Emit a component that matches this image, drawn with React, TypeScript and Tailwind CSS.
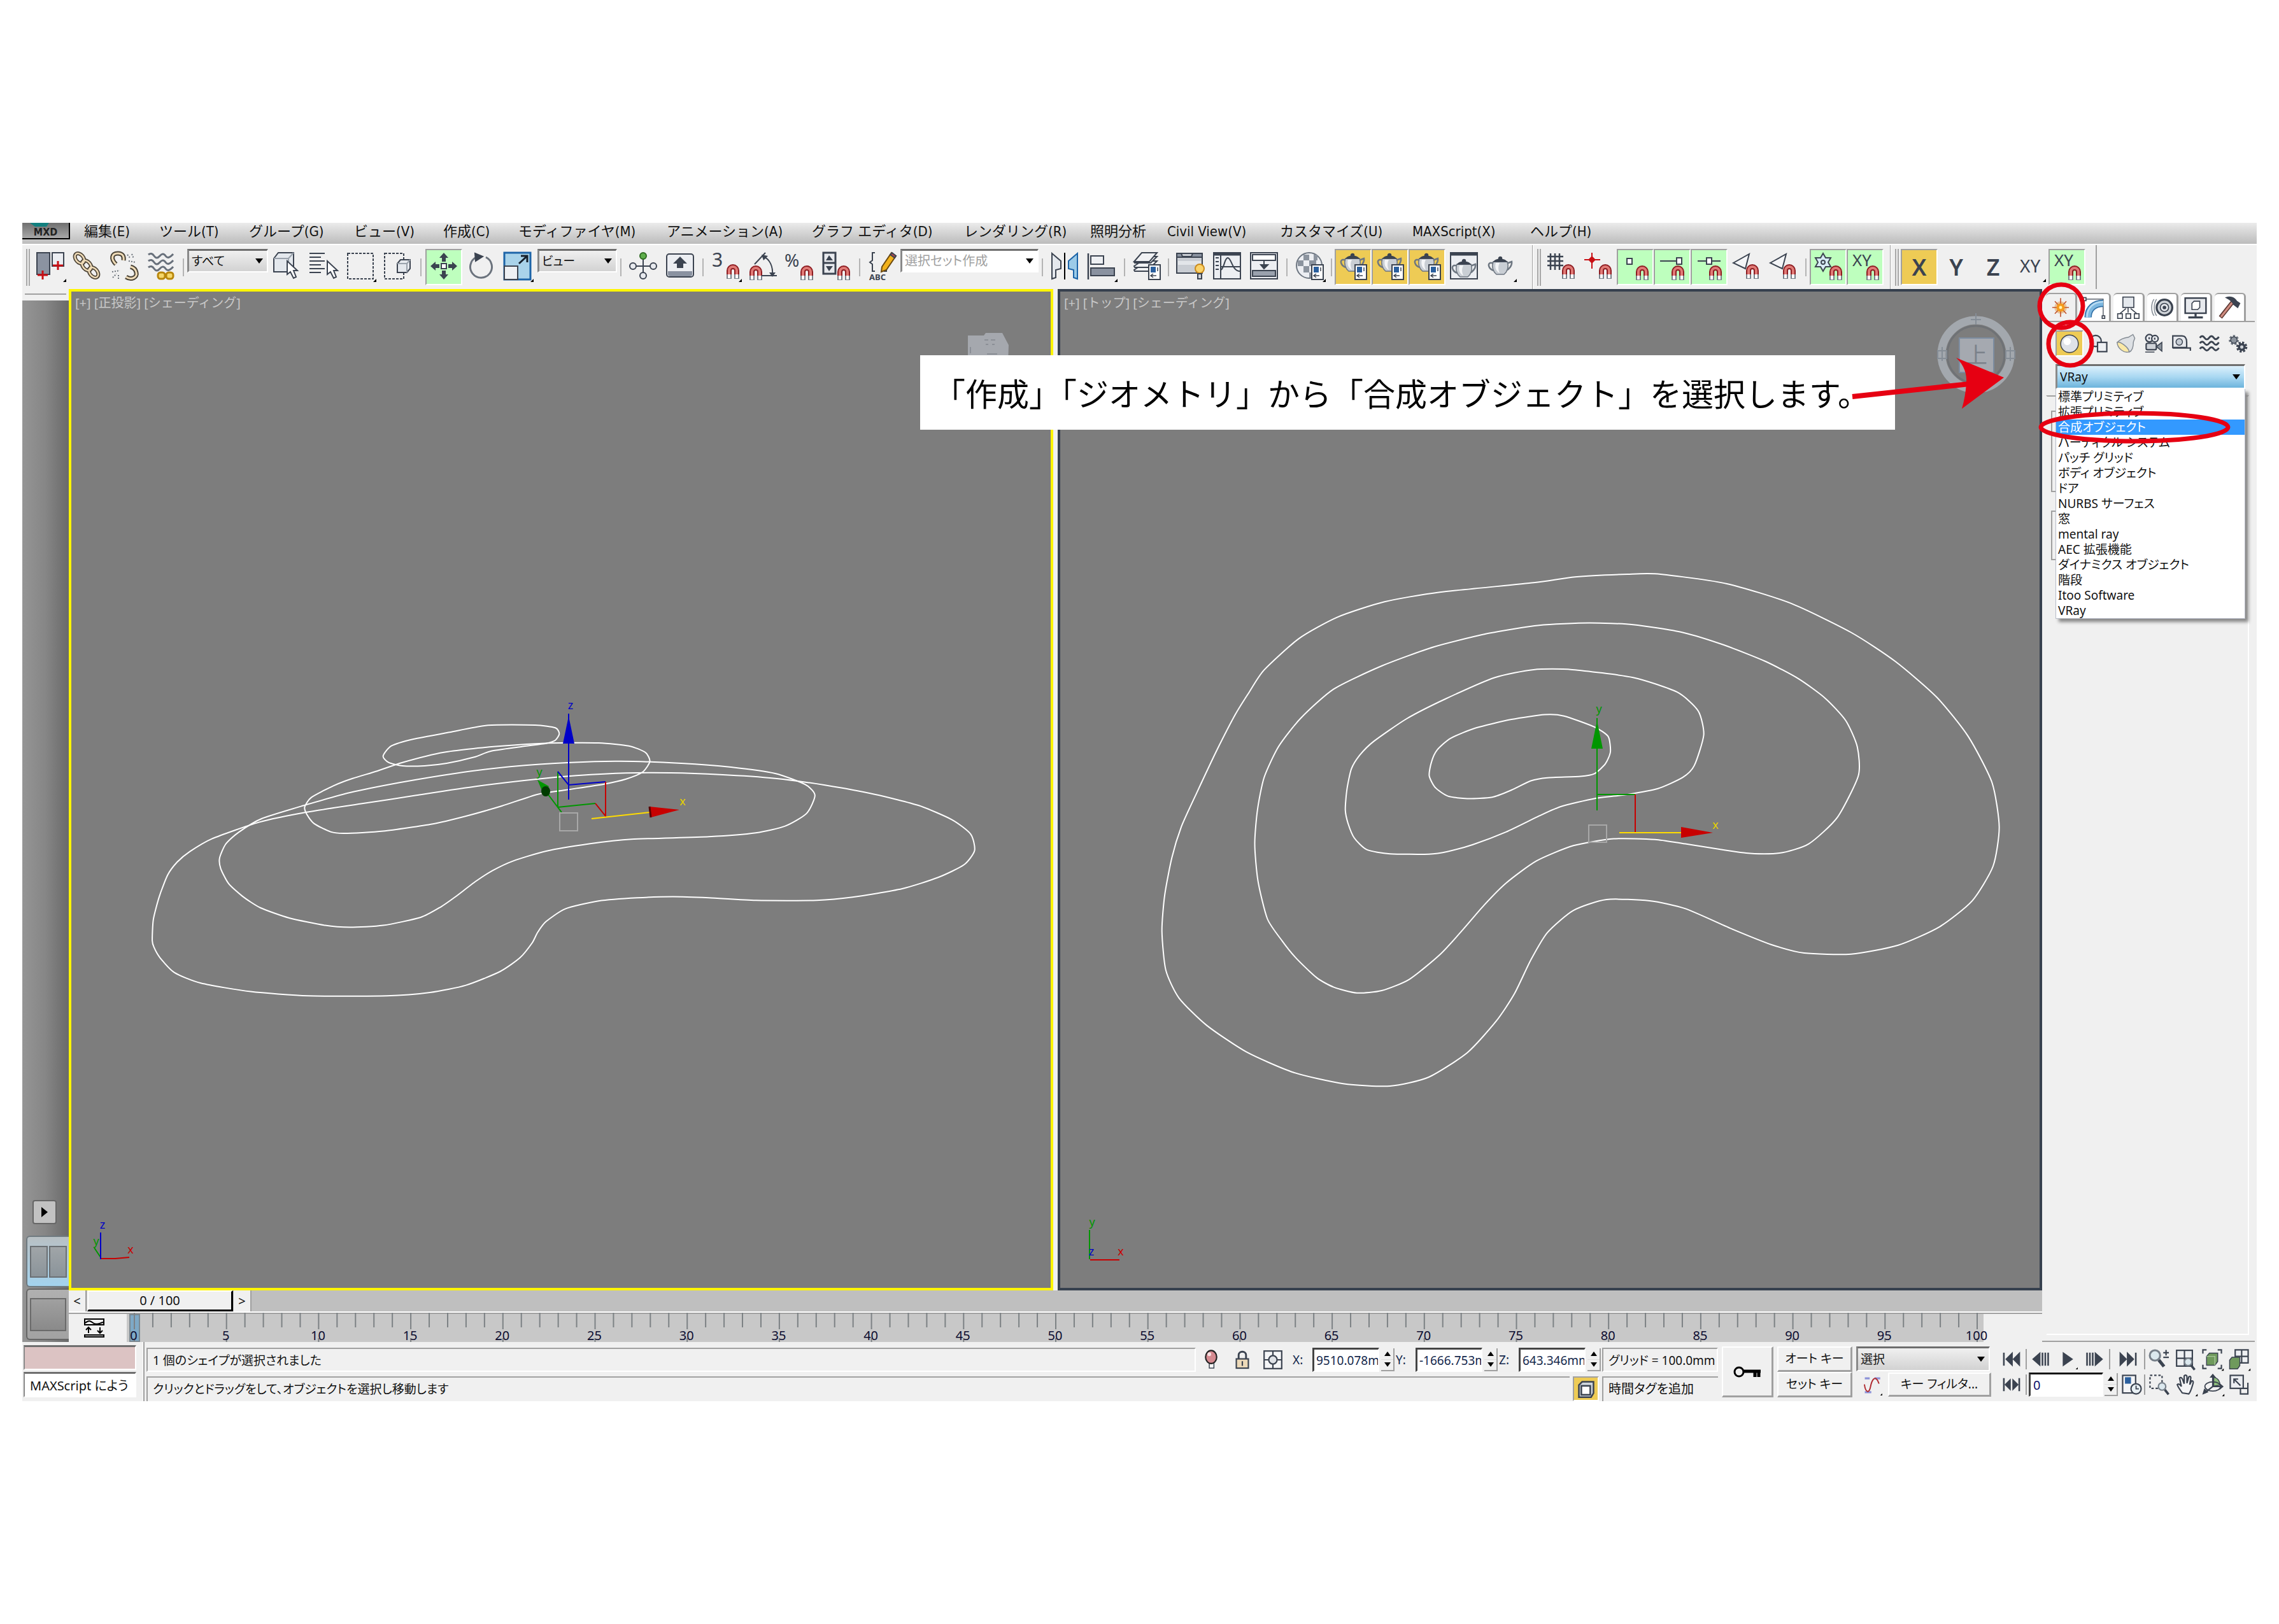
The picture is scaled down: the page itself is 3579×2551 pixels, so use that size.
import type { ReactNode } from "react";
import clsx from "clsx";

type Point = [number, number];

const INK = "#3b4350";

const sunken =
  "border-2 border-t-[#a0a0a0] border-l-[#a0a0a0] border-r-white border-b-white";
const raised =
  "border-t-2 border-l-2 border-r-3 border-b-3 border-t-white border-l-white border-r-[#a0a0a0] border-b-[#a0a0a0]";

/* ---------- splines ---------- */

// Closed Catmull-Rom spline, points are given on a scaled grid
function spline(points: Point[], ox: number, oy: number, sx: number, sy: number) {
  const p = points.map(([x, y]) => [ox + x * sx, oy + y * sy]);
  const n = p.length;
  const tension = 9;
  let d = `M${p[0][0].toFixed(1)} ${p[0][1].toFixed(1)}`;
  for (let i = 0; i < n; i++) {
    const a = p[(i - 1 + n) % n];
    const b = p[i];
    const c = p[(i + 1) % n];
    const e = p[(i + 2) % n];
    const c1 = [b[0] + (c[0] - a[0]) / tension, b[1] + (c[1] - a[1]) / tension];
    const c2 = [c[0] - (e[0] - b[0]) / tension, c[1] - (e[1] - b[1]) / tension];
    d += `C${[...c1, ...c2, ...c].map((v) => v.toFixed(1)).join(" ")}`;
  }
  return d + "Z";
}

const perspectiveShapes: Point[][] = [
  [
    [22, 1190], [24, 1090], [35, 980], [50, 880], [67, 820], [90, 770], [130, 710], [215, 632],
    [300, 585], [400, 545], [500, 505], [610, 462], [720, 428], [790, 412], [880, 400], [960, 399],
    [1050, 407], [1150, 425], [1240, 457], [1330, 500], [1410, 553], [1470, 620], [1504, 688],
    [1511, 765], [1492, 832], [1445, 892], [1380, 945], [1290, 985], [1225, 1000], [1115, 1000],
    [1030, 988], [965, 983], [900, 988], [830, 1003], [770, 1040], [735, 1100], [720, 1150],
    [710, 1200], [688, 1270], [652, 1335], [590, 1400], [525, 1434], [447, 1450], [305, 1450],
    [200, 1430], [110, 1390], [62, 1340], [36, 1270], [25, 1220],
  ],
  [
    [144, 800], [155, 735], [178, 680], [220, 615], [300, 550], [380, 492], [470, 445], [570, 402],
    [670, 370], [780, 350], [870, 344], [980, 354], [1070, 372], [1150, 402], [1205, 455],
    [1222, 505], [1207, 590], [1168, 650], [1115, 682], [1030, 700], [890, 712], [815, 733],
    [735, 768], [675, 815], [638, 860], [608, 910], [570, 985], [545, 1030], [508, 1080],
    [440, 1118], [380, 1127], [335, 1118], [270, 1083], [218, 1035], [185, 980], [160, 920],
    [146, 850],
  ],
  [
    [298, 560], [310, 515], [350, 460], [385, 425], [430, 390], [475, 350], [550, 302], [640, 275],
    [740, 259], [830, 258], [885, 272], [915, 303], [923, 345], [910, 395], [880, 428], [840, 452],
    [770, 480], [720, 500], [655, 555], [590, 603], [530, 640], [440, 674], [370, 684], [345, 677],
    [315, 638], [302, 595],
  ],
  [
    [440, 320], [455, 272], [495, 240], [560, 208], [630, 175], [715, 174], [752, 187], [759, 215],
    [752, 245], [735, 260], [690, 276], [635, 297], [605, 325], [555, 354], [515, 366], [475, 366],
    [450, 350],
  ],
];

const topShapes: Point[][] = [
  [
    [17, 1085], [22, 980], [35, 870], [52, 780], [80, 680], [115, 560], [150, 450], [175, 385],
    [202, 320], [265, 228], [335, 165], [420, 120], [520, 92], [690, 64], [765, 47], [860, 39],
    [920, 39], [1040, 67], [1155, 124], [1265, 210], [1345, 295], [1420, 400], [1477, 515],
    [1520, 650], [1533, 780], [1522, 895], [1484, 997], [1425, 1073], [1350, 1127], [1265, 1153],
    [1180, 1150], [1120, 1125], [1050, 1080], [965, 1020], [900, 997], [822, 993], [762, 1025],
    [715, 1090], [685, 1170], [655, 1270], [622, 1350], [570, 1442], [500, 1514], [430, 1540],
    [345, 1533], [255, 1500], [170, 1440], [98, 1362], [48, 1282], [24, 1200],
  ],
  [
    [185, 830], [190, 730], [202, 635], [228, 545], [268, 462], [328, 376], [415, 308], [510, 252],
    [610, 212], [700, 189], [790, 182], [870, 187], [960, 210], [1035, 247], [1110, 295],
    [1170, 346], [1218, 403], [1255, 468], [1276, 545], [1278, 630], [1240, 752], [1188, 830],
    [1135, 857], [1075, 857], [965, 830], [910, 817], [835, 815], [762, 835], [695, 880],
    [640, 945], [600, 1010], [560, 1085], [520, 1155], [465, 1227], [415, 1260], [370, 1267],
    [328, 1250], [297, 1222], [260, 1165], [235, 1115], [208, 1050], [191, 940],
  ],
  [
    [349, 730], [352, 670], [360, 610], [375, 570], [400, 530], [460, 463], [530, 405], [620, 342],
    [690, 319], [760, 319], [870, 342], [950, 385], [988, 440], [998, 510], [981, 600], [960, 635],
    [915, 668], [860, 685], [800, 697], [740, 720], [700, 748], [640, 795], [580, 832], [535, 852],
    [500, 860], [430, 859], [388, 847], [365, 812], [354, 770],
  ],
  [
    [501, 630], [505, 590], [515, 555], [540, 520], [585, 490], [650, 465], [710, 451], [745, 455],
    [800, 487], [825, 515], [829, 560], [820, 595], [800, 624], [775, 632], [715, 636], [685, 645],
    [650, 672], [615, 693], [570, 697], [535, 690], [512, 665],
  ],
];

/* ---------- icon parts ---------- */

function Svg({ children, flyout, className = "size-11" }: { children: ReactNode; flyout?: boolean; className?: string }) {
  return (
    <svg viewBox="0 0 44 44" className={clsx("shrink-0 overflow-visible", className)} fill="none" stroke={INK} strokeWidth="2" aria-hidden>
      {children}
      {flyout && <path d="M47 42v5h-5z" fill="#000" stroke="none" />}
    </svg>
  );
}

function Magnet({ x = 23, y = 20 }: { x?: number; y?: number }) {
  return (
    <g transform={`translate(${x} ${y})`}>
      <path d="M4 22V9a6 6 0 0 1 12 0v13" stroke="#8e1d22" strokeWidth="8" />
      <path d="M4 15V9a6 6 0 0 1 12 0v6" stroke="#e07a76" strokeWidth="4" />
      <path d="M4 15v7M16 15v7" stroke="#77808a" strokeWidth="8" />
      <path d="M4 15v6M16 15v6" stroke="#fff" strokeWidth="4" />
    </g>
  );
}

function Teapot({ x = 0, y = 0 }: { x?: number; y?: number }) {
  return (
    <g transform={`translate(${x} ${y})`} strokeWidth="1.5">
      <path d="M10 10H5c-4 2-2 10 6 12M31 11l8-3c1 6-4 12-9 14" stroke="#6d7681" strokeWidth="2.5" />
      <path d="M10 8h22c3 8 0 16-5 20H15C10 24 7 16 10 8z" fill="#c9ced4" stroke="#6d7681" />
      <path d="M14 10h6c-3 6-2 11 0 16-6-3-8-10-6-16z" fill="#f4f5f7" stroke="none" />
      <path d="M11 8c4-5 16-5 20 0z" fill={INK} />
      <circle cx="21" cy="3" r="2.5" fill={INK} />
    </g>
  );
}

function Page() {
  return (
    <g>
      <rect x="25" y="20" width="18" height="23" fill="#fff" />
      <rect x="28" y="23" width="8" height="9" fill="#2a5f9e" stroke="none" />
      <path d="M28 37h9M32 34l-4 3 4 3M39 24v6" strokeWidth="1.5" />
    </g>
  );
}

function Cursor({ x, y }: { x: number; y: number }) {
  return (
    <path transform={`translate(${x} ${y})`} d="M0 0v21l5-4 5 10 4-2-4-10h6z" fill="#fff" />
  );
}

function Cross({ x, y }: { x: number; y: number }) {
  return <path transform={`translate(${x} ${y})`} d="M-8 0h16M0-7v14M-3 0h6" stroke="#c80f14" strokeWidth="3" />;
}

/* ---------- toolbar ---------- */

const TONE = {
  none: "",
  green: "bg-[#beffbe] border-2 border-t-[#a0a0a0] border-l-[#a0a0a0] border-r-white border-b-white",
  yellow: "bg-[#eecb55] border-2 border-t-[#a0a0a0] border-l-[#a0a0a0] border-r-white border-b-white",
};

function Tool({
  label,
  tone = "none",
  flyout,
  children,
}: {
  label: string;
  tone?: keyof typeof TONE;
  flyout?: boolean;
  children: ReactNode;
}) {
  return (
    <button
      type="button"
      aria-label={label}
      className={clsx("flex h-[57px] w-[58px] shrink-0 items-center justify-center pb-1", TONE[tone])}
    >
      <Svg flyout={flyout}>{children}</Svg>
    </button>
  );
}

function AxisTool({ label, tone = "none" }: { label: string; tone?: keyof typeof TONE }) {
  return (
    <button
      type="button"
      className={clsx(
        "h-[57px] w-[58px] shrink-0 text-center text-[36px] leading-[54px] font-semibold text-[#3b4350]",
        TONE[tone],
      )}
    >
      {label}
    </button>
  );
}

function Sep({ className = "w-[13px]" }: { className?: string }) {
  return (
    <div className={clsx("flex h-[57px] shrink-0 items-center justify-center", className)}>
      <div className="h-7 w-0.5 bg-[#b4b4b4]" />
    </div>
  );
}

function Grip() {
  return (
    <div className="flex h-[58px] w-[15px] shrink-0 gap-0.5 pl-1.5">
      <div className="w-0.5 bg-[#a8a8a8]" />
      <div className="w-0.5 bg-[#a8a8a8]" />
    </div>
  );
}

function Combo({
  label,
  options,
  className,
  selectClass = "bg-linear-to-b from-[#f0f0f0] to-[#d2d2d2]",
}: {
  label: string;
  options: string[];
  className: string;
  selectClass?: string;
}) {
  return (
    <div className={clsx("relative shrink-0", className)}>
      <select
        aria-label={label}
        className={clsx(
          "h-full w-full appearance-none border-t-3 border-l-3 border-r-2 border-b-2 border-t-[#6e6e6e] border-l-[#8a8a8a] border-r-white border-b-white pl-1 outline-none",
          selectClass,
        )}
      >
        {options.map((option) => (
          <option key={option}>{option}</option>
        ))}
      </select>
      <svg viewBox="0 0 12 8" className="pointer-events-none absolute top-1/2 right-2 h-2 w-3 -translate-y-1/2" aria-hidden>
        <path d="M0 0h12L6 8z" />
      </svg>
    </div>
  );
}

const menus = [
  { label: "編集(E)", width: "w-[118px]" },
  { label: "ツール(T)", width: "w-[141px]" },
  { label: "グループ(G)", width: "w-[165px]" },
  { label: "ビュー(V)", width: "w-[140px]" },
  { label: "作成(C)", width: "w-[118px]" },
  { label: "モディファイヤ(M)", width: "w-[233px]" },
  { label: "アニメーション(A)", width: "w-[228px]" },
  { label: "グラフ エディタ(D)", width: "w-[239px]" },
  { label: "レンダリング(R)", width: "w-[198px]" },
  { label: "照明分析", width: "w-[121px]" },
  { label: "Civil View(V)", width: "w-[177px]" },
  { label: "カスタマイズ(U)", width: "w-[208px]" },
  { label: "MAXScript(X)", width: "w-[185px]" },
  { label: "ヘルプ(H)", width: "w-[118px]" },
];

function MenuBar() {
  return (
    <nav className="flex h-[33px] bg-linear-to-b from-[#ebebeb] to-[#bcbcbc] font-['DejaVu_Sans_Condensed','Noto_Sans_CJK_JP',sans-serif] [font-feature-settings:normal]">
      <button
        type="button"
        className="relative mr-[22px] h-[26px] w-[75px] shrink-0 overflow-hidden border-r-2 border-b-2 border-black bg-linear-to-b from-[#6f6f6f] to-[#a8a8a8] pt-1 text-[16px] leading-[22px] font-bold text-[#222]"
      >
        <svg viewBox="0 0 30 6" className="absolute top-0 left-3 h-1.5 w-[30px]" aria-hidden>
          <path d="M0 0h30l-4 6H8z" fill="#12807f" />
        </svg>
        MXD
      </button>
      {menus.map((menu) => (
        <button key={menu.label} type="button" className={clsx("h-7 shrink-0 text-left text-[22px] leading-7 whitespace-nowrap", menu.width)}>
          {menu.label}
        </button>
      ))}
    </nav>
  );
}

function Toolbar() {
  return (
    <div className="flex h-[71px] items-start border-t-2 border-white pt-1.5">
      <Grip />
      <Tool label="選択フィルタ" flyout>
        <rect x="1" y="1" width="20" height="34" fill="#8b93a1" />
        <rect x="25" y="1" width="18" height="21" fill="#eceef2" />
        <Cross x={10} y={36} />
        <Cross x={34} y={21} />
      </Tool>
      <Tool label="リンク">
        {[0, 11, 22].map((o) => (
          <ellipse key={o} cx={10 + o} cy={10 + o} rx="6" ry="9" transform={`rotate(-40 ${10 + o} ${10 + o})`} stroke="#4f4638" strokeWidth="6" />
        ))}
        {[0, 11, 22].map((o) => (
          <ellipse key={o} cx={10 + o} cy={10 + o} rx="6" ry="9" transform={`rotate(-40 ${10 + o} ${10 + o})`} stroke="#f0dcb8" strokeWidth="2.5" />
        ))}
      </Tool>
      <Tool label="リンク解除">
        <path d="M9 19C0 10 3 2 12 2c8 0 10 5 9 11M25 39c9 6 18 0 16-7-1-5-5-8-9-9" stroke="#4a4336" strokeWidth="7" />
        <path d="M9 19C0 10 3 2 12 2c8 0 10 5 9 11M25 39c9 6 18 0 16-7-1-5-5-8-9-9" stroke="#f0dcb8" strokeWidth="3" />
        <path d="M27 4l5 6M34 3l3 7M29 14l11 2M4 40l6-6M13 42v-8M3 31l12-2" stroke="#6d747c" strokeDasharray="2 2" />
      </Tool>
      <Tool label="バインド">
        {[4, 14, 24].map((y) => (
          <path key={y} d={`M2 ${y}q5-4 9 2t9 0t9 0t12-3`} stroke="#68707b" strokeWidth="3" />
        ))}
        <rect x="17" y="32" width="11" height="10" rx="4" stroke="#b8860b" strokeWidth="3" fill="#f5d76a" />
        <rect x="30" y="32" width="11" height="10" rx="4" stroke="#b8860b" strokeWidth="3" fill="#f5d76a" />
      </Tool>
      <Sep className="w-3" />
      <Combo label="フィルタ" options={["すべて"]} className="h-[37px] w-[127px] text-[19px]" />
      <Tool label="オブジェクトを選択">
        <path d="M2 10l7-9h24v24l-8 6H2z" fill="#e4e8ed" />
        <path d="M2 10h23v21M25 10l8-9" stroke="#9aa2ac" />
        <Cursor x={23} y={14} />
      </Tool>
      <Tool label="名前による選択">
        <path d="M0 2h24M0 8h18M0 14h24M0 20h18M0 26h24M0 32h18" />
        <Cursor x={28} y={14} />
      </Tool>
      <Tool label="矩形領域" flyout>
        <rect x="2" y="2" width="40" height="40" strokeDasharray="4 2" />
      </Tool>
      <Tool label="ウィンドウ/交差">
        <rect x="2" y="2" width="30" height="40" strokeDasharray="4 2" />
        <path d="M22 18l5-6h15v14l-5 6H22z" fill="#e4e8ed" />
        <path d="M22 18h15v14M37 18l5-6" stroke="#9aa2ac" />
      </Tool>
      <Sep className="w-[15px]" />
      <Tool label="選択して移動" tone="green">
        <rect x="18" y="18" width="8" height="8" fill="#fff" />
        <path d="M22 1l7 8h-4v6h-6V9h-4zM22 43l7-8h-4v-6h-6v6h-4zM1 22l8-7v4h6v6H9v4zM43 22l-8-7v4h-6v6h6v4z" fill={INK} stroke="none" />
      </Tool>
      <Tool label="選択して回転">
        <path d="M15 8A17 17 0 1 0 30 8" strokeWidth="3" stroke="#6b737d" />
        <path d="M13 2l12 5-11 7z" fill={INK} />
      </Tool>
      <Tool label="選択して均等にスケール" flyout>
        <rect x="1" y="1" width="41" height="42" fill="#a9d3ea" stroke="#1c64a8" strokeWidth="3" />
        <rect x="1" y="22" width="21" height="21" fill="#eef0f3" />
        <path d="M24 18L37 6M27 6h10v10" strokeWidth="3" stroke="#16202c" />
      </Tool>
      <Combo label="参照座標系" options={["ビュー"]} className="ml-0.5 h-[37px] w-[125px] text-[19px]" />
      <Sep className="w-3" />
      <Tool label="ピボット">
        <path d="M22 10v26M6 22h32" />
        <circle cx="22" cy="6" r="5" fill="#5fae4c" stroke="#2e6a22" />
        <circle cx="6" cy="22" r="5" fill="#e8eaee" />
        <circle cx="38" cy="22" r="5" fill="#e8eaee" />
        <circle cx="22" cy="37" r="5" fill="#e8eaee" />
      </Tool>
      <Tool label="選択して操作">
        <rect x="1" y="3" width="42" height="36" rx="4" fill="#eceef2" />
        <path d="M3 30h38v5q0 3-4 3H7q-4 0-4-3z" fill="#8a92a0" stroke="none" />
        <path d="M22 7l11 11h-6v7H17v-7h-6z" fill={INK} stroke="none" />
      </Tool>
      <Sep className="w-[14px]" />
      <Tool label="3D スナップ" flyout>
        <text x="0" y="23" fontSize="30" fill={INK} stroke="none">3</text>
        <Magnet />
      </Tool>
      <Tool label="角度スナップ">
        <Magnet x={1} y={22} />
        <path d="M9 19L26 1M22 6c12 6 16 18 15 30M20 37h24" />
        <path d="M20 4l10 2-7 7zM32 32h10l-5 7z" fill={INK} stroke="none" />
      </Tool>
      <Tool label="パーセント スナップ">
        <text x="-2" y="23" fontSize="28" fill={INK} stroke="none">%</text>
        <Magnet y={22} />
      </Tool>
      <Tool label="スピナー スナップ">
        <rect x="1" y="1" width="19" height="33" fill="#e8eaee" strokeWidth="3" />
        <path d="M1 17h19" strokeWidth="3" />
        <path d="M5 13l5-8 6 8zM5 22l5 8 6-8z" fill={INK} stroke="none" />
        <Magnet y={22} />
      </Tool>
      <Sep />
      <Tool label="名前付き選択セットを編集">
        <path d="M11 1H7v12l-4 3 4 3v11h4M25 30h4V19l3-3" />
        <path d="M37 1l7 5-15 22-8 3 1-8z" fill="#f2b21c" stroke="#6c4a10" />
        <path d="M35 4l7 5 2-3-6-5z" fill="#b5484b" />
        <text x="2" y="44" fontSize="13" fontWeight="700" fill={INK} stroke="none">ABC</text>
      </Tool>
      <Combo label="名前付き選択セット" options={["選択セット作成"]} className="h-[37px] w-[217px] text-[20px]" selectClass="bg-white text-[#a0a0a0]" />
      <Sep className="w-3" />
      <Tool label="ミラー">
        <path d="M2 2l14 12v12L8 28v12l-6 2z" fill="#e4e8ed" />
        <path d="M42 2L28 14v12l8 2v12l6 2z" fill="#9ccbe8" stroke="#1c64a8" />
        <path d="M22 1v42" stroke="#000" />
      </Tool>
      <Tool label="位置合わせ" flyout>
        <path d="M1 2v41" strokeWidth="2.5" />
        <rect x="5" y="6" width="20" height="13" fill="#eef0f3" />
        <rect x="5" y="25" width="37" height="12" fill="#8a92a0" />
      </Tool>
      <Sep />
      <Tool label="レイヤ">
        {[28, 22, 15].map((y) => (
          <path key={y} d={`M2 ${y}L14 ${y - 8}h24L28 ${y + 2}H3z`} fill="#f1f2f4" />
        ))}
        <path d="M2 15L14 1h24L26 15z" fill="#f1f2f4" />
        <Page />
      </Tool>
      <Sep className="w-2.5" />
      <Tool label="リボン">
        <path d="M1 33V2h40v31z" fill="#c9cdd3" />
        <path d="M1 2h7l2 5h14l2-5h15v6H1z" fill="#8a92a0" />
        <path d="M3 14h36v6H3z" fill="#e2e5e9" stroke="none" />
        <circle cx="37" cy="26" r="7" fill="#fbd36a" stroke="#c98a1d" />
        <rect x="34" y="34" width="6" height="8" fill="#cfd3d8" />
      </Tool>
      <Tool label="カーブ エディタ">
        <rect x="1" y="1" width="42" height="41" fill="#eceef2" />
        <path d="M1 3h42" strokeWidth="5" />
        <path d="M12 4v38M4 9h5M4 15h5M4 21h5M4 27h5" />
        <path d="M13 28c6-8 5-18 10-19 6 0 7 21 19 21M12 23h31" strokeWidth="2" />
      </Tool>
      <Tool label="スケマティック ビュー">
        <rect x="1" y="1" width="42" height="41" fill="#eceef2" />
        <rect x="4" y="4" width="36" height="9" fill="#fff" />
        <rect x="4" y="29" width="36" height="9" fill="#9aa1ad" />
        <path d="M22 13v8M17 20h11l-6 6z" fill={INK} />
      </Tool>
      <Sep className="w-[14px]" />
      <Tool label="マテリアル エディタ" flyout>
        <circle cx="21" cy="21" r="20" fill="#eceef2" stroke="#6d7681" />
        <path d="M12 4h9v9h-9zM21 13h11v9H21zM3 13h9v9H3zM12 22h9v10h-9zM32 22h8v10h-8zM28 4h6v9h-6zM21 32h8v8h-8z" fill="#8c949f" stroke="none" />
        <Page />
      </Tool>
      <Sep className="w-2.5" />
      {["レンダリング設定", "レンダリング ウィンドウ", "レンダリング"].map((label) => (
        <Tool key={label} label={label} tone="yellow">
          <Teapot y={2} />
          <Page />
        </Tool>
      ))}
      <Tool label="レンダリング フレーム">
        <rect x="1" y="1" width="42" height="41" fill="#eceef2" />
        <path d="M1 3h42" strokeWidth="5" />
        <Teapot x={1} y={11} />
      </Tool>
      <Tool label="プロダクション レンダリング" flyout>
        <Teapot y={7} />
      </Tool>
      <div className="-mt-1.5 ml-5 h-[69px] w-0.5 shrink-0 border-l border-[#a0a0a0] bg-white" />
      <Grip />
      <Tool label="グリッド スナップ">
        <path d="M5 2v26M12 2v26M19 2v26M0 7h25M0 14h25M0 21h25" strokeWidth="2.5" />
        <Magnet />
      </Tool>
      <Tool label="ピボット スナップ">
        <path d="M12 1v25M0 12h25" stroke="#c80f14" strokeWidth="2" />
        <path d="M12 6l6 6-6 6-6-6z" fill="#c80f14" stroke="none" />
        <Magnet />
      </Tool>
      <Tool label="頂点スナップ" tone="green">
        <rect x="9" y="10" width="8" height="9" fill="#fff" />
        <Magnet y={22} />
      </Tool>
      <Tool label="端点スナップ" tone="green">
        <path d="M3 14h26" />
        <rect x="29" y="9" width="8" height="10" fill="#fff" />
        <Magnet x={21} y={22} />
      </Tool>
      <Tool label="中点スナップ" tone="green">
        <path d="M4 14h36" />
        <rect x="18" y="9" width="8" height="10" fill="#fff" />
        <Magnet x={22} y={22} />
      </Tool>
      <Tool label="面スナップ">
        <path d="M2 17L27 3l-6 23z" fill="#f4f5f7" />
        <Magnet x={22} />
      </Tool>
      <Tool label="面中心スナップ">
        <path d="M2 17L27 3l-6 23z" fill="#f4f5f7" />
        <Magnet x={22} />
      </Tool>
      <Sep />
      <Tool label="フリーズ スナップ" tone="green">
        <path d="M14 2l4 7h8l-4 7 4 7h-8l-4 7-4-7H2l4-7-4-7h8z" fill="#d7ebf5" />
        <circle cx="14" cy="16" r="3" />
        <Magnet x={24} y={22} />
      </Tool>
      <Tool label="軸拘束スナップ" tone="green">
        <text x="2" y="22" fontSize="26" fill={INK} stroke="none">XY</text>
        <Magnet x={24} y={22} />
      </Tool>
      <div className="-mt-1.5 ml-2.5 h-[69px] w-0.5 shrink-0 border-l border-[#a0a0a0] bg-white" />
      <Grip />
      <AxisTool label="X" tone="yellow" />
      <AxisTool label="Y" />
      <AxisTool label="Z" />
      <Tool label="平面拘束" flyout>
        <text x="6" y="32" fontSize="28" fill={INK} stroke="none">XY</text>
      </Tool>
      <Tool label="スナップで軸拘束を使用" tone="green">
        <text x="2" y="22" fontSize="26" fill={INK} stroke="none">XY</text>
        <Magnet x={24} y={22} />
      </Tool>
      <div className="-mt-1.5 ml-4 h-[69px] w-0.5 shrink-0 bg-[#a0a0a0]" />
    </div>
  );
}

/* ---------- viewports ---------- */

function ViewportLabel({ children }: { children: ReactNode }) {
  return (
    <p className="absolute top-1.5 left-1.5 text-[20px] leading-6 text-[#c8c8c8] [font-feature-settings:normal]">
      {children}
    </p>
  );
}

function PerspectiveView() {
  return (
    <section className="relative flex-1 border-4 border-[#fff500] bg-[#7d7d7d]">
      <svg viewBox="112 458 1538 1565" className="block h-full w-full" fill="none" strokeWidth="2" aria-hidden>
        {perspectiveShapes.map((points, i) => (
          <path key={i} d={spline(points, 220, 1081, 0.8673, 0.3333)} stroke="#fff" />
        ))}
        <path d="M1520 527h25l3-4h26l10 19-2 60h-58l-4-20z" fill="#a5a8ae" />
        <path d="M1546 534h6M1556 534h7M1548 541h4M1558 541h4M1524 545v10M1550 556h16" stroke="#8b8f96" />
        <path d="M876 1212v56" stroke="#009600" />
        <path d="M876 1268l59-6M857 1243l25 33" stroke="#009600" />
        <path d="M876 1212l17 21 58-5M893 1121v135" stroke="#0000c8" />
        <path d="M951 1228v54l-16-20" stroke="#c80000" />
        <path d="M929 1286l92-10" stroke="#ffdc00" />
        <path d="M893 1125l9 43h-18z" fill="#0000c8" />
        <path d="M844 1225l18 10-8 14z" fill="#009600" />
        <ellipse cx="857" cy="1243" rx="7" ry="8" fill="#003c00" />
        <path d="M1020 1267l47 5-45 12z" fill="#c80000" />
        <path d="M1020 1267l2 17" stroke="#5a0000" strokeWidth="3" />
        <rect x="879" y="1277" width="28" height="28" stroke="#a8a8a8" />
        <path d="M158 1975l-10-15" stroke="#009600" />
        <path d="M158 1977h23l22-2" stroke="#c80000" />
        <path d="M158 1936v42" stroke="#0000c8" />
        <g fontSize="18" textAnchor="middle">
          <text x="896" y="1114" fill="#0000c8">z</text>
          <text x="847" y="1219" fill="#009600">y</text>
          <text x="1072" y="1265" fill="#e6d200">x</text>
          <text x="161" y="1930" fill="#0000c8">z</text>
          <text x="151" y="1956" fill="#009600">y</text>
          <text x="205" y="1969" fill="#c80000">x</text>
        </g>
      </svg>
      <ViewportLabel>[+] [正投影] [シェーディング]</ViewportLabel>
    </section>
  );
}

function TopView() {
  return (
    <section className="relative flex-1 border-4 border-[#36404e] bg-[#7d7d7d]">
      <svg viewBox="1665 458 1538 1565" className="block h-full w-full" fill="none" strokeWidth="2" aria-hidden>
        {topShapes.map((points, i) => (
          <path key={i} d={spline(points, 1810, 881, 0.8673, 0.5357)} stroke="#fff" />
        ))}
        <circle cx="3103" cy="557" r="54" stroke="#a3a8ae" strokeWidth="13" />
        <circle cx="3103" cy="557" r="45" stroke="#6f7276" strokeWidth="3" />
        <path d="M3103 492v18M3095 502h16M3043 551h14v12h-14zM3050 545v22M3150 551h14v12h-14zM3157 545v22" stroke="#858d96" />
        <rect x="3077" y="531" width="54" height="54" fill="#a5a9b0" stroke="#7c8ca0" />
        <text x="3104" y="570" fontSize="34" textAnchor="middle" fill="#7b818a">上</text>
        <rect x="2495" y="1296" width="28" height="27" stroke="#a8a8a8" />
        <path d="M2508 1128v145M2508 1248h60" stroke="#009600" />
        <path d="M2568 1248v59" stroke="#c80000" />
        <path d="M2543 1308h98" stroke="#ffdc00" />
        <path d="M2508 1132l9 44h-18z" fill="#009600" />
        <path d="M2640 1299l50 9-50 8z" fill="#c80000" />
        <path d="M1711 1932v46" stroke="#009600" />
        <path d="M1712 1979h46" stroke="#c80000" />
        <g fontSize="18" textAnchor="middle">
          <text x="2511" y="1120" fill="#009600">y</text>
          <text x="2694" y="1302" fill="#e6d200">x</text>
          <text x="1715" y="1926" fill="#009600">y</text>
          <text x="1714" y="1972" fill="#0000c8">z</text>
          <text x="1760" y="1972" fill="#c80000">x</text>
        </g>
      </svg>
      <ViewportLabel>[+] [トップ] [シェーディング]</ViewportLabel>
    </section>
  );
}

function LayoutTabs() {
  return (
    <aside className="flex w-[73px] shrink-0 flex-col">
      <div className="h-[18px] pt-[7px]">
        <div className="mx-1 h-0.5 bg-[#a0a0a0]" />
      </div>
      <div className="flex flex-1 flex-col items-end justify-end gap-0.5 bg-linear-to-r from-[#959595] via-[#868686] to-[#6a6a6a] pb-[3px]">
        <button type="button" aria-label="ビューポート レイアウト" className="mr-[19px] mb-4 flex size-[38px] items-center justify-center rounded-sm border-2 border-[#666] bg-[#c2c2c2]">
          <svg viewBox="0 0 10 16" className="h-4 w-2.5" aria-hidden>
            <path d="M0 0l10 8-10 8z" />
          </svg>
        </button>
        <button type="button" aria-label="レイアウト 1" className="flex h-[81px] w-[67px] items-center gap-0.5 rounded-l-md border-2 border-r-0 border-[#6f7a80] bg-linear-to-b from-[#b8c0c4] to-[#a3d3ee] pl-1">
          <span className="h-[50px] w-7 border-2 border-[#6a6f73] bg-linear-to-b from-[#a0a5a8] to-[#8b949a]" />
          <span className="h-[50px] w-7 border-2 border-[#6a6f73] bg-linear-to-b from-[#a0a5a8] to-[#8b949a]" />
        </button>
        <button type="button" aria-label="レイアウト 2" className="flex h-[81px] w-[67px] items-center rounded-l-md border-2 border-r-0 border-[#666] bg-linear-to-b from-[#b0b0b0] to-[#a2a2a2] pl-1">
          <span className="h-[52px] w-[57px] border-2 border-[#6a6a6a] bg-linear-to-b from-[#a0a0a0] to-[#8a8a8a]" />
        </button>
      </div>
    </aside>
  );
}

const frames = Array.from({ length: 101 }, (_, i) => i);

function Timeline() {
  return (
    <>
      <div className="flex h-[33px] bg-[#bfbfbf] text-[20px] leading-[30px]">
        <button type="button" className="w-7 border-r-2 border-[#a0a0a0] bg-[#f0f0f0]">&lt;</button>
        <button type="button" className="mx-px w-[229px] border-t-2 border-l-2 border-r-3 border-b-3 border-t-white border-l-white border-r-black border-b-black bg-[#f0f0f0] leading-7">
          0 / 100
        </button>
        <button type="button" className="w-7 border-r-2 border-[#a0a0a0] bg-[#f0f0f0]">&gt;</button>
      </div>
      <div className="h-1 border-t-2 border-b-2 border-t-white border-b-[#a0a0a0]" />
      <div className="flex h-11">
        <button type="button" aria-label="ミニ カーブ エディタ" className="flex w-[91px] items-center justify-center pr-3">
          <svg viewBox="0 0 32 32" className="size-8" fill="none" stroke="#000" strokeWidth="2" aria-hidden>
            <rect x="1" y="2" width="30" height="9" />
            <path d="M2 8c6-5 8-3 12 0s8 2 16-1M7 24v-8M3 19l4-4 4 4M25 15v8M21 20l4 4 4-4" />
            <rect x="1" y="27" width="30" height="3" />
          </svg>
        </button>
        <div className="flex-1 pr-[92px]">
          <svg viewBox="0 0 2916 44" className="block h-full w-full overflow-visible" aria-hidden>
            <rect width="2916" height="44" fill="#c8c8c8" />
            <rect x="5" y="1" width="15" height="42" fill="#7ea9c6" stroke="#7b8891" strokeWidth="2" />
            {frames.map((frame) => {
              const x = 12 + frame * 28.94;
              const major = frame % 5 === 0;
              return (
                <g key={frame}>
                  <path d={major ? `M${x} -2V24M${x} 38V44` : `M${x} -2V21`} stroke="#7d8285" strokeWidth="2" />
                  {major && (
                    <text x={x - 1} y="41" fontSize="20" textAnchor="middle" fill="#0c0c30">
                      {frame}
                    </text>
                  )}
                </g>
              );
            })}
          </svg>
        </div>
      </div>
    </>
  );
}

/* ---------- command panel ---------- */

const objectTypes = [
  "標準プリミティブ",
  "拡張プリミティブ",
  "合成オブジェクト",
  "パーティクル システム",
  "パッチ グリッド",
  "ボディ オブジェクト",
  "ドア",
  "NURBS サーフェス",
  "窓",
  "mental ray",
  "AEC 拡張機能",
  "ダイナミクス オブジェクト",
  "階段",
  "Itoo Software",
  "VRay",
];

const panelTabs: { label: string; icon: ReactNode }[] = [
  {
    label: "作成",
    icon: (
      <>
        <circle cx="22" cy="22" r="12" fill="#e9c49a" stroke="none" />
        <path d="M22 4v36M6 22h32M11 10l22 24M33 10L11 34" stroke="#c0542c" />
        <circle cx="22" cy="22" r="8" fill="#f59a1c" stroke="none" />
        <circle cx="22" cy="22" r="3" fill="#fff6b0" stroke="none" />
      </>
    ),
  },
  {
    label: "修正",
    icon: (
      <>
        <path d="M3 6v0h36v34" strokeWidth="1.5" />
        <path d="M10 41C10 24 22 14 39 14" stroke="#2f6fa6" strokeWidth="14" />
        <path d="M10 41C10 24 22 14 39 14" stroke="#7db8e0" strokeWidth="10" />
        <path d="M8 41C8 22 21 11 39 11" stroke="#b9dcf2" strokeWidth="3" />
        <rect x="1" y="3" width="5" height="6" fill="#fff" />
        <rect x="37" y="38" width="5" height="5" fill="#fff" />
      </>
    ),
  },
  {
    label: "階層",
    icon: (
      <>
        <rect x="12" y="2" width="21" height="20" fill="#e4e8ed" />
        <path d="M22 22v10M18 24L6 34M27 24l12 10" />
        <rect x="2" y="34" width="9" height="9" fill="#fff" />
        <rect x="18" y="34" width="9" height="9" fill="#fff" />
        <rect x="34" y="34" width="9" height="9" fill="#fff" />
      </>
    ),
  },
  {
    label: "モーション",
    icon: (
      <>
        <path d="M7 6c-6 8-6 24 0 32M12 6c-6 8-6 24 0 32" stroke="#8b939c" />
        <circle cx="27" cy="22" r="15" fill="#cfd3d8" strokeWidth="4" />
        <circle cx="27" cy="22" r="8" fill="#e8eaee" />
        <circle cx="27" cy="22" r="2.5" fill={INK} />
      </>
    ),
  },
  {
    label: "表示",
    icon: (
      <>
        <rect x="2" y="4" width="40" height="29" fill="#e8eaee" strokeWidth="3" />
        <path d="M15 14l4-4h11v12l-4 4H15z" fill="#fff" />
        <path d="M22 33v6M8 41h28" strokeWidth="4" />
      </>
    ),
  },
  {
    label: "ユーティリティ",
    icon: (
      <>
        <path d="M28 12L5 41" stroke="#5a3630" strokeWidth="8" />
        <path d="M28 12L6 40" stroke="#d08c80" strokeWidth="4" />
        <path d="M16 3c8-3 16 0 20 7l6 4-4 8-8-6c-2-6-6-9-14-13z" fill={INK} />
      </>
    ),
  },
];

const categories: { label: string; icon: ReactNode }[] = [
  {
    label: "ジオメトリ",
    icon: (
      <>
        <circle cx="22" cy="22" r="19" fill="#dfe2e7" />
        <circle cx="17" cy="17" r="8" fill="#fff" stroke="none" />
      </>
    ),
  },
  {
    label: "シェイプ",
    icon: (
      <>
        <circle cx="18" cy="16" r="12" fill="#e8eaee" strokeWidth="3" />
        <rect x="22" y="19" width="20" height="20" strokeWidth="3" fill="#eef0f3" />
      </>
    ),
  },
  {
    label: "ライト",
    icon: (
      <>
        <path d="M28 8l10-6 4 8-3 8c0 12-4 20-9 22L4 19c6-6 16-10 24-11z" fill="#dde0e4" stroke="#848b93" />
        <path d="M4 19c6-3 24 10 26 20-10 5-26-7-26-20z" fill="#fbe9a6" stroke="#848b93" />
      </>
    ),
  },
  {
    label: "カメラ",
    icon: (
      <>
        <circle cx="13" cy="10" r="8" fill="#e8eaee" strokeWidth="3" />
        <circle cx="25" cy="11" r="7" fill="#e8eaee" strokeWidth="3" />
        <path d="M11 10h3M23 11h3" strokeWidth="4" />
        <rect x="6" y="21" width="22" height="14" rx="3" fill="#cfd3d8" strokeWidth="3" />
        <path d="M28 28l12-9v19zM4 40h20" fill="#8b939c" />
      </>
    ),
  },
  {
    label: "ヘルパー",
    icon: (
      <>
        <path d="M3 5h20c7 0 10 6 10 14v11H3z" fill="#e8eaee" strokeWidth="3" />
        <circle cx="17" cy="18" r="7" fill="#c6ccd4" />
        <path d="M3 31h38v6" strokeWidth="3" />
      </>
    ),
  },
  {
    label: "スペース ワープ",
    icon: (
      <>
        {[9, 21, 33].map((y) => (
          <path key={y} d={`M1 ${y}q5-7 10 0t10 0t10 0t11-2`} strokeWidth="4" />
        ))}
      </>
    ),
  },
  {
    label: "システム",
    icon: (
      <>
        <circle cx="14" cy="14" r="8" stroke="#6d757f" strokeWidth="6" strokeDasharray="4 3" />
        <circle cx="14" cy="14" r="7" fill="#8b939c" />
        <circle cx="31" cy="29" r="9" strokeWidth="6" strokeDasharray="4 3" />
        <circle cx="31" cy="29" r="6" fill="#cfd3d8" strokeWidth="5" />
      </>
    ),
  },
];

function CommandPanel() {
  return (
    <aside className="flex w-[337px] shrink-0 flex-col pt-1.5">
      <div role="tablist" className="mr-[3px] ml-1.5 flex gap-1 border-b-2 border-[#a0a0a0]">
        {panelTabs.map((tab, i) => (
          <button
            key={tab.label}
            type="button"
            role="tab"
            aria-label={tab.label}
            aria-selected={i === 0}
            className={clsx(
              "flex h-11 w-[49px] items-center justify-center rounded-t-md border-t-2 border-r-3 border-[#a0a0a0]",
              i === 0 ? "bg-[#f0f0f0]" : "bg-white",
            )}
          >
            <Svg className="size-9">{tab.icon}</Svg>
          </button>
        ))}
      </div>
      <div className="mt-[13px] ml-[21px] flex">
        {categories.map((category, i) => (
          <button
            key={category.label}
            type="button"
            aria-label={category.label}
            className={clsx(
              "flex h-[41px] w-11 items-center justify-center",
              i === 0 && "border-2 border-t-[#a0a0a0] border-l-[#a0a0a0] border-r-white border-b-white bg-[#eecb55]",
            )}
          >
            <Svg className="size-8">{category.icon}</Svg>
          </button>
        ))}
      </div>
      <div className="relative mt-3 ml-[21px] w-[298px]">
        <Combo
          label="オブジェクト カテゴリ"
          options={["VRay"]}
          className="h-[39px] w-full text-[19px]"
          selectClass="bg-linear-to-b from-[#dcf0fb] via-[#a9d8f2] to-[#6cb4dc]"
        />
        <ul role="listbox" aria-label="オブジェクト カテゴリ" className="absolute top-full left-0 z-10 w-full border-r border-b border-l border-[#b8bcc8] bg-white shadow-[5px_5px_5px_#888]">
          {objectTypes.map((type) => (
            <li
              key={type}
              role="option"
              aria-selected={type === "合成オブジェクト"}
              className={clsx(
                "h-6 pl-[3px] text-[19px] leading-6 whitespace-nowrap",
                type === "合成オブジェクト" && "bg-[#3399ff] text-white",
              )}
            >
              {type}
            </li>
          ))}
        </ul>
      </div>
      <div className="mt-2.5 mr-3 mb-[9px] ml-1.5 flex flex-1 flex-col gap-[29px] border-2 border-t-[#a0a0a0] border-r-white border-b-white border-l-[#f0f0f0] px-1.5 pt-[22px]">
        <div className="h-[128px] border-2 border-[#a0a0a0]" />
        <div className="h-[78px] border-2 border-[#a0a0a0]" />
      </div>
      <div className="mr-[3px] h-0.5 bg-[#a0a0a0]" />
    </aside>
  );
}

/* ---------- status bar ---------- */

function Spinner() {
  return (
    <div className="flex h-[36px] w-[21px] shrink-0 flex-col border-r-2 border-b-2 border-[#a0a0a0] bg-[#f0f0f0]">
      <button type="button" aria-label="増やす" className="flex flex-1 items-center justify-center border-b border-[#ddd]">
        <svg viewBox="0 0 10 7" className="h-[7px] w-2.5" aria-hidden>
          <path d="M5 0l5 7H0z" />
        </svg>
      </button>
      <button type="button" aria-label="減らす" className="flex flex-1 items-center justify-center">
        <svg viewBox="0 0 10 7" className="h-[7px] w-2.5" aria-hidden>
          <path d="M0 0h10L5 7z" />
        </svg>
      </button>
    </div>
  );
}

function Coordinate({ axis, value }: { axis: string; value: string }) {
  return (
    <label className="flex shrink-0 items-center">
      <span className="w-[31px] text-[19px] text-[#14284c]">{axis}:</span>
      <input
        defaultValue={value}
        className="h-[38px] w-[105px] border-t-3 border-l-3 border-r-2 border-b-2 border-t-[#444] border-l-[#444] border-r-white border-b-white bg-white pl-[3px] text-[19px] text-[#14284c]"
      />
      <span className="mr-0.5 ml-[3px]">
        <Spinner />
      </span>
    </label>
  );
}

function NavButton({
  label,
  flyout,
  className = "w-[42px]",
  size = "size-8",
  children,
}: {
  label: string;
  flyout?: boolean;
  className?: string;
  size?: string;
  children: ReactNode;
}) {
  return (
    <button type="button" aria-label={label} className={clsx("flex h-10 shrink-0 items-center justify-center", className)}>
      <Svg className={size} flyout={flyout}>{children}</Svg>
    </button>
  );
}

function NavSep({ className }: { className?: string }) {
  return <div className={clsx("h-8 w-0.5 shrink-0 bg-[#a0a0a0]", className)} />;
}

function Lens({ x = 0, y = 0 }: { x?: number; y?: number }) {
  return (
    <g transform={`translate(${x} ${y})`}>
      <circle cx="10" cy="10" r="8" fill="#dbe8ee" stroke="#77808a" strokeWidth="3" />
      <path d="M16 17l8 10" strokeWidth="5" />
    </g>
  );
}

function StatusBar() {
  return (
    <footer className="flex h-[93px] overflow-hidden text-[19px]">
      <div className="flex w-[190px] shrink-0 flex-col gap-[3px] border-r border-white pt-[5px] pl-0.5">
        <input aria-label="マクロ レコーダ" className="h-[39px] w-[177px] border-t-3 border-l-2 border-r-2 border-b-2 border-t-[#6e6e6e] border-l-[#8a8a8a] border-r-white border-b-white bg-[#dcc3c3]" />
        <input
          aria-label="MAXScript リスナー"
          defaultValue="MAXScript によう"
          className="h-[40px] w-[177px] border-t-3 border-l-2 border-r-2 border-b-2 border-t-[#6e6e6e] border-l-[#8a8a8a] border-r-white border-b-white bg-white pl-2 text-[20px]"
        />
      </div>
      <div className="flex flex-1 flex-col gap-[7px] border-l-2 border-[#a0a0a0] pt-[9px] pl-[3px]">
        <div className="flex h-[38px] items-center">
          <p className={clsx("h-full flex-1 pl-2 leading-[36px]", sunken)}>1 個のシェイプが選択されました</p>
          <NavButton label="選択の分離" className="w-[48px]">
            <path d="M18 26h10v14H18z" fill="#fff" />
            <ellipse cx="22" cy="16" rx="12" ry="14" fill="#d58a90" stroke="#222" strokeWidth="3" />
            <circle cx="18" cy="10" r="4" fill="#f7dfe1" stroke="none" />
          </NavButton>
          <NavButton label="選択をロック" className="w-[50px]">
            <path d="M14 20v-8c0-10 16-10 16 0v8" strokeWidth="4" />
            <rect x="9" y="20" width="26" height="20" fill="#ecd9b8" strokeWidth="3" />
            <path d="M22 25v10" strokeWidth="3" />
          </NavButton>
          <NavButton label="絶対モード" className="mr-2 w-[46px]">
            <rect x="3" y="3" width="38" height="38" fill="#f4f5f7" strokeWidth="3" />
            <path d="M22 3v38M3 22h38" strokeWidth="3" />
            <circle cx="22" cy="22" r="9" fill="#dfe2e7" strokeWidth="3" />
          </NavButton>
          <Coordinate axis="X" value="9510.078mm" />
          <Coordinate axis="Y" value="-1666.753mm" />
          <Coordinate axis="Z" value="643.346mm" />
          <p className={clsx("h-full w-[182px] shrink-0 pl-2 leading-[36px] whitespace-nowrap", sunken)}>グリッド = 100.0mm</p>
        </div>
        <div className="flex h-[39px]">
          <p className="mr-[5px] h-full flex-1 border-t-2 border-l-2 border-[#a0a0a0] pl-2 leading-[36px]">
            クリックとドラッグをして、オブジェクトを選択し移動します
          </p>
          <button type="button" aria-label="アダプティブ" className={clsx("mr-[5px] flex w-[41px] items-center justify-center bg-[#eecb55]", sunken)}>
            <Svg className="size-7">
              <path d="M4 12l8-8h28v28l-6 10H4z" fill="#cfd6de" strokeWidth="4" />
              <rect x="10" y="14" width="22" height="22" fill="#fff" strokeWidth="4" />
            </Svg>
          </button>
          <p className="h-full w-[182px] shrink-0 border-t-2 border-l-2 border-[#a0a0a0] pl-2 text-[20px] leading-[36px]">時間タグを追加</p>
        </div>
      </div>
      <div className="flex shrink-0 gap-1.5 pt-[7px] pl-1.5">
        <button type="button" aria-label="キーを設定" className={clsx("flex h-[80px] w-[81px] items-center justify-center", raised)}>
          <svg viewBox="0 0 44 22" className="h-[22px] w-11" fill="none" stroke="#000" strokeWidth="3" aria-hidden>
            <circle cx="9" cy="11" r="7" />
            <path d="M16 10h27M34 10v9M40 10v9" strokeWidth="5" />
          </svg>
        </button>
        <div className="flex w-[118px] flex-col">
          <button type="button" className={clsx("h-10 w-full", raised)}>オート キー</button>
          <button type="button" className={clsx("h-10 w-full", raised)}>セット キー</button>
        </div>
        <div className="flex w-[212px] flex-col gap-0.5">
          <Combo label="キー選択" options={["選択"]} className="h-[39px] w-[210px]" />
          <div className="flex h-[39px]">
            <NavButton label="接線タイプ" flyout className="w-[50px]" size="size-7">
              <path d="M4 5h12M28 5h14M4 39h16" stroke="#8c92d8" strokeWidth="5" />
              <path d="M3 20c3 22 12 22 15 6S27 2 32 6s6 8 7 12" stroke="#b02a30" strokeWidth="3" />
            </NavButton>
            <button type="button" className={clsx("h-[38px] flex-1", raised)}>キー フィルタ...</button>
          </div>
        </div>
      </div>
      <div className="flex w-[417px] shrink-0 flex-col pt-[7px] pl-[11px]">
        <div className="flex h-10 items-center">
          <NavButton label="先頭へ" size="size-7">
            <path d="M3 6v32" strokeWidth="4" />
            <path d="M24 6v32L8 22zM42 6v32L26 22z" fill={INK} />
          </NavButton>
          <NavSep className="mx-px" />
          <NavButton label="前のフレーム" size="size-7">
            <path d="M20 6v32L2 22z" fill={INK} />
            <path d="M26 6v32M33 6v32M40 6v32" strokeWidth="4" />
          </NavButton>
          <NavButton label="再生" flyout size="size-7">
            <path d="M11 6l23 16-23 16z" fill={INK} />
          </NavButton>
          <NavButton label="次のフレーム" size="size-7">
            <path d="M24 6v32l18-16z" fill={INK} />
            <path d="M4 6v32M11 6v32M18 6v32" strokeWidth="4" />
          </NavButton>
          <NavSep className="mx-0.5" />
          <NavButton label="末尾へ" className="w-[51px]" size="size-7">
            <path d="M41 6v32" strokeWidth="4" />
            <path d="M2 6v32l16-16zM20 6v32l16-16z" fill={INK} />
          </NavButton>
          <NavSep />
          <NavButton label="ズーム">
            <g transform="scale(1.4)"><Lens /></g>
            <path d="M32 8h12M38 2v12M32 18h12" strokeWidth="3" />
          </NavButton>
          <NavButton label="すべてをズーム">
            <path d="M3 3h34v34H3zM20 3v34M3 20h34" strokeWidth="3" fill="#eef0f3" />
            <Lens x={18} y={18} />
          </NavButton>
          <NavButton label="全範囲ズーム" flyout>
            <path d="M2 10V2h8M34 2h8v8M2 34v8h8M34 42h8v-8" strokeWidth="3" />
            <path d="M10 16l6-7h18v18l-6 8H10z" fill="#6f9a5c" />
            <path d="M10 16h18v19" stroke="#a9c89b" />
          </NavButton>
          <NavButton label="全ビュー全範囲ズーム" flyout>
            <path d="M14 2h28v28H14zM28 2v28M14 16h28" strokeWidth="3" fill="#eef0f3" />
            <path d="M2 24l5-6h17v18l-5 7H2z" fill="#6f9a5c" />
          </NavButton>
        </div>
        <div className="flex h-10 items-center">
          <NavButton label="キー モード" size="size-7">
            <path d="M3 6v32M41 6v32" strokeWidth="4" />
            <path d="M19 9v26L6 22zM25 9v26l13-13z" fill={INK} />
          </NavButton>
          <NavSep className="mx-px" />
          <input
            aria-label="現在のフレーム"
            defaultValue="0"
            className="ml-0.5 h-[38px] w-[117px] border-t-3 border-l-3 border-r-2 border-b-2 border-t-[#111] border-l-[#444] border-r-white border-b-white bg-white pl-1 text-[20px] text-[#10106a]"
          />
          <span className="mx-0.5">
            <Spinner />
          </span>
          <NavButton label="時間設定" className="w-[39px]">
            <rect x="2" y="2" width="28" height="38" fill="#f4f5f7" strokeWidth="3" />
            <rect x="7" y="6" width="13" height="14" fill="#2a5f9e" stroke="none" />
            <circle cx="31" cy="31" r="11" fill="#e8f0f4" strokeWidth="3" />
            <path d="M31 24v7h6" strokeWidth="2.5" />
          </NavButton>
          <NavSep className="mr-px" />
          <NavButton label="領域ズーム">
            <rect x="2" y="2" width="26" height="28" strokeWidth="3" strokeDasharray="5 4" />
            <Lens x={18} y={16} />
          </NavButton>
          <NavButton label="ビューをパン" flyout>
            <path d="M14 40C8 32 5 28 3 22c3-3 6 0 9 4L8 8c3-3 6 0 7 4l3 8V3c3-3 6-1 6 2v14l4-14c4-2 5 1 4 5l-2 12 4-8c4-1 4 3 3 6-3 10-5 18-9 22z" fill="#f4f5f7" strokeWidth="3" />
          </NavButton>
          <NavButton label="軌道" flyout>
            <path d="M22 2v24L4 40M22 26h20" strokeWidth="3" />
            <path d="M24 6c10 2 14 10 13 17L24 25z" fill="#8fbf7c" />
            <ellipse cx="22" cy="26" rx="17" ry="10" strokeWidth="2.5" />
            <path d="M1 42l3-10 7 6zM17 6l5-6 5 6zM38 21l6 5-6 5z" fill={INK} />
          </NavButton>
          <NavButton label="ビューポート最大化">
            <path d="M18 30h22v12H24V30M40 18v24" strokeWidth="3" />
            <rect x="2" y="2" width="28" height="28" fill="#eceef2" strokeWidth="3" />
            <path d="M24 24L10 10M10 19v-9h9" strokeWidth="3" />
          </NavButton>
        </div>
      </div>
    </footer>
  );
}

/* ---------- annotations ---------- */

function Callouts() {
  return (
    <>
      <div className="absolute top-[558px] left-[1445px] z-20 w-[1531px] bg-white pl-[21px] font-['Noto_Sans_CJK_JP',sans-serif] text-[50px] leading-[117px] whitespace-nowrap text-black [font-feature-settings:normal]">
        「作成」「ジオメトリ」から「合成オブジェクト」を選択します。
      </div>
      <svg viewBox="0 0 3579 2551" className="pointer-events-none absolute top-0 left-0 z-30 w-full" fill="none" stroke="#e60012" strokeWidth="7" aria-hidden>
        <circle cx="3237" cy="481" r="34" />
        <circle cx="3251" cy="540" r="34" />
        <ellipse cx="3352" cy="671" rx="147" ry="22" />
        <path d="M2909 623l184-20" strokeWidth="8" />
        <path d="M3147 593l-75-31c13 12 17 26 16 40-1 14-3 26-7 40z" fill="#e60012" stroke="none" />
      </svg>
    </>
  );
}

export default function App() {
  return (
    <main className="relative min-h-screen bg-white px-[35px] pt-[350px] font-['Noto_Sans','Noto_Sans_CJK_JP',sans-serif] text-[#111] [font-feature-settings:'palt']">
      <div className="bg-[#f0f0f0]">
        <MenuBar />
        <Toolbar />
        <div className="flex">
          <LayoutTabs />
          <div className="flex min-w-0 flex-1 flex-col">
            <div className="flex h-[1573px] gap-[7px]">
              <PerspectiveView />
              <TopView />
            </div>
            <Timeline />
          </div>
          <CommandPanel />
        </div>
        <StatusBar />
      </div>
      <Callouts />
    </main>
  );
}
